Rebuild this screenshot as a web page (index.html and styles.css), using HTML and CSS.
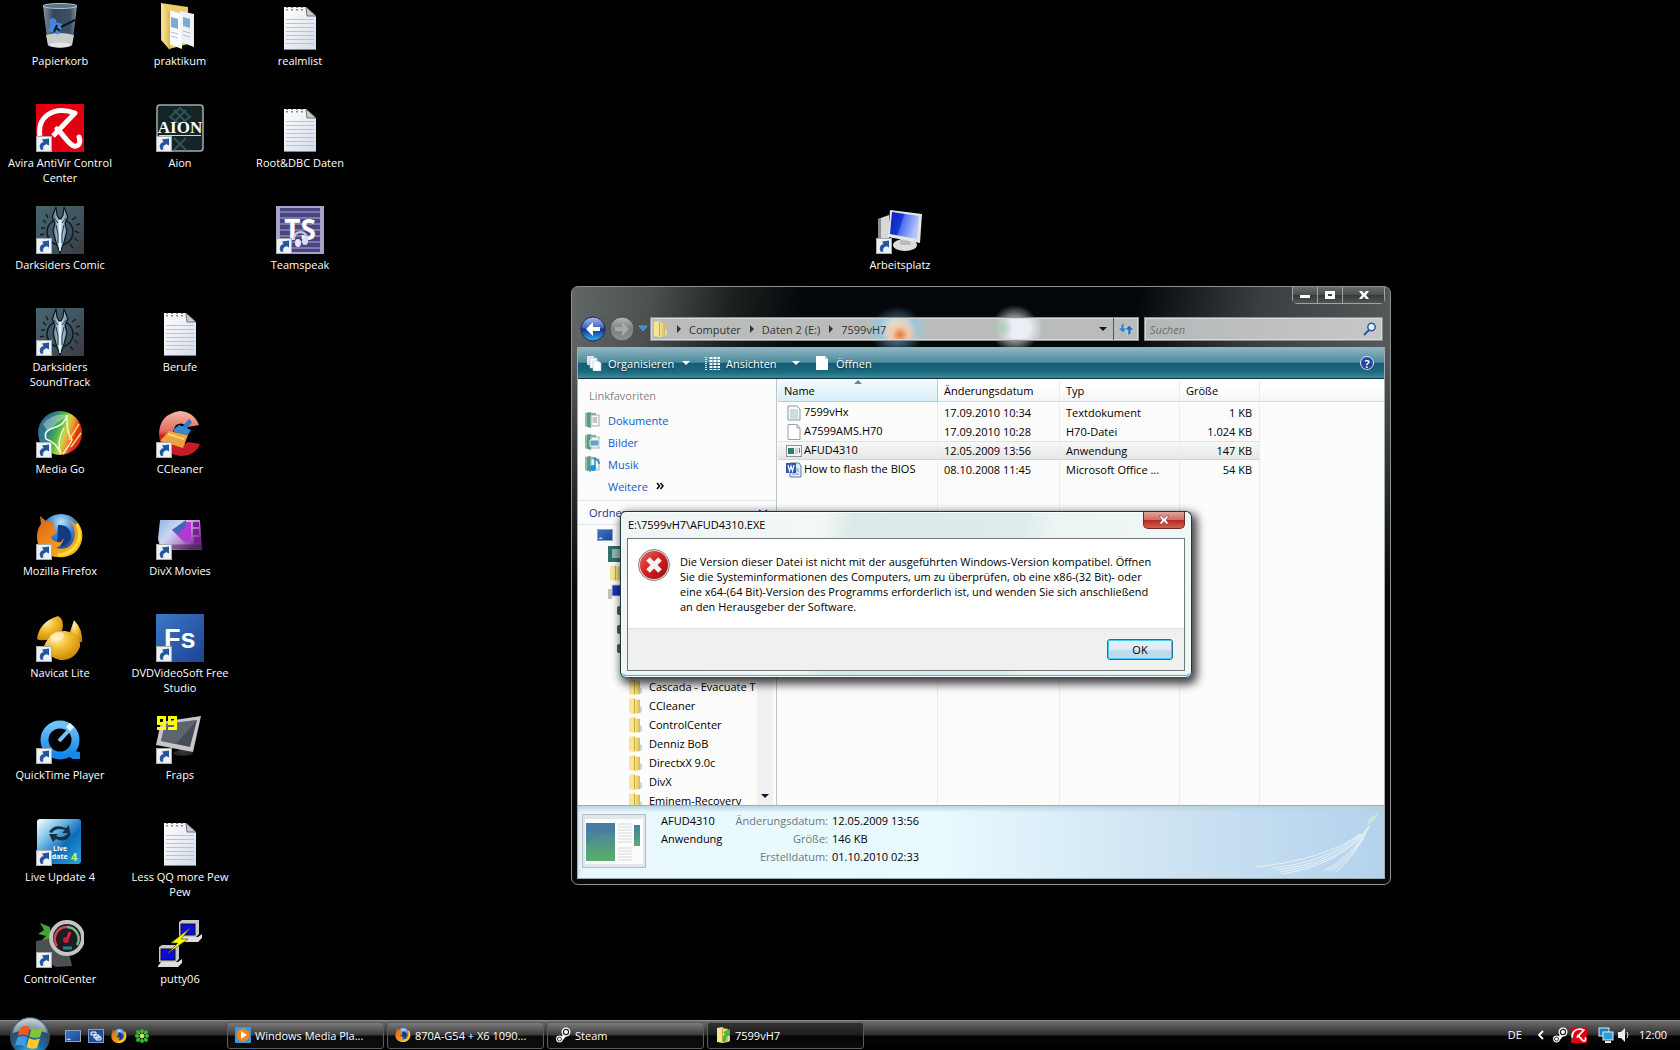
FILE: index.html
```html
<!DOCTYPE html>
<html lang="de">

<head>
    <meta charset="UTF-8">
    <meta name="viewport" content="width=device-width, initial-scale=1.0">
    <title>Desktop</title>
    <link rel="stylesheet" href="styles.css">
</head>

<body>
    <svg class="sprites" aria-hidden="true">
        <defs>
            <linearGradient id="gFolder" x1="0" x2="1"><stop offset="0" stop-color="#f9eba6"/><stop offset=".5" stop-color="#ecd477"/><stop offset="1" stop-color="#d8b64c"/></linearGradient>
            <linearGradient id="gPaper" x1="0" y1="0" x2="1" y2="1"><stop offset="0" stop-color="#fff"/><stop offset="1" stop-color="#d3dceb"/></linearGradient>
            <linearGradient id="gGlass" x1="0" x2="1"><stop offset="0" stop-color="#8894a0"/><stop offset=".3" stop-color="#34485e"/><stop offset=".8" stop-color="#3b5064"/><stop offset="1" stop-color="#8b969e"/></linearGradient>
            <linearGradient id="gDark" x1="0" y1="0" x2="1" y2="1"><stop offset="0" stop-color="#47646f"/><stop offset=".5" stop-color="#3f5662"/><stop offset="1" stop-color="#3c3a3e"/></linearGradient>
            <linearGradient id="gSteel" x1="0" x2="1"><stop offset="0" stop-color="#3c5c7a"/><stop offset=".5" stop-color="#d5ebf5"/><stop offset="1" stop-color="#4f7d9b"/></linearGradient>
            <linearGradient id="gBlue" x1="0" y1="0" x2="1" y2="1"><stop offset="0" stop-color="#3c78c6"/><stop offset="1" stop-color="#1d4493"/></linearGradient>
            <linearGradient id="gScreen" x1="0" x2="1" y2=".3"><stop offset="0" stop-color="#0b1fae"/><stop offset=".45" stop-color="#1738d6"/><stop offset=".5" stop-color="#4e6ef0"/><stop offset="1" stop-color="#b3c5fb"/></linearGradient>
            <linearGradient id="gRainbow" x1="0" x2="1" y2=".35"><stop offset="0" stop-color="#2f5f95"/><stop offset=".35" stop-color="#2c7f8a"/><stop offset=".55" stop-color="#4fb643"/><stop offset=".7" stop-color="#c7d843"/><stop offset=".8" stop-color="#f09a35"/><stop offset=".95" stop-color="#e02d1b"/></linearGradient>
            <linearGradient id="gFox" x1="0" y1="0" x2="1" y2="1"><stop offset="0" stop-color="#d9600f"/><stop offset=".5" stop-color="#f3901d"/><stop offset="1" stop-color="#f4c61f"/></linearGradient>
            <radialGradient id="gGlobe" cx=".5" cy=".2" r=".8"><stop offset="0" stop-color="#b9e2fa"/><stop offset=".4" stop-color="#3d86cf"/><stop offset="1" stop-color="#0d2f78"/></radialGradient>
            <radialGradient id="gGold" cx=".35" cy=".25" r=".8"><stop offset="0" stop-color="#fff1b8"/><stop offset=".45" stop-color="#f3bd2f"/><stop offset="1" stop-color="#c88508"/></radialGradient>
            <linearGradient id="gDivx" x1="0" x2="1" y2=".6"><stop offset="0" stop-color="#8fb4e4"/><stop offset=".4" stop-color="#ccd5ef"/><stop offset=".7" stop-color="#b68ccc"/><stop offset="1" stop-color="#6b2d86"/></linearGradient>
            <linearGradient id="gRed" y1="0" x2="0" y2="1"><stop offset="0" stop-color="#f5b9a9"/><stop offset=".45" stop-color="#df6a5e"/><stop offset=".55" stop-color="#cc2026"/><stop offset="1" stop-color="#c21a26"/></linearGradient>
            <linearGradient id="gQt" y1="0" x2="0" y2="1"><stop offset="0" stop-color="#6fc2f8"/><stop offset="1" stop-color="#1486e8"/></linearGradient>
            <linearGradient id="gLive" x1="0" y1="0" x2="1" y2="1"><stop offset="0" stop-color="#fff"/><stop offset=".3" stop-color="#7fc3ec"/><stop offset=".6" stop-color="#0b6db8"/><stop offset="1" stop-color="#2aa6e0"/></linearGradient>
            <radialGradient id="gOrb" cx=".5" cy="1" r=".95"><stop offset="0" stop-color="#3fd0fa"/><stop offset=".4" stop-color="#1b6fa4"/><stop offset=".75" stop-color="#2d4d66"/><stop offset="1" stop-color="#9fb6c4"/></radialGradient>
            <linearGradient id="gBack" y1="0" x2="0" y2="1"><stop offset="0" stop-color="#a9bfe8"/><stop offset=".45" stop-color="#3f64bd"/><stop offset=".5" stop-color="#0f2f96"/><stop offset="1" stop-color="#3ab4f0"/></linearGradient>
            <linearGradient id="gForward" y1="0" x2="0" y2="1"><stop offset="0" stop-color="#b6b8b8"/><stop offset=".5" stop-color="#7d8080"/><stop offset="1" stop-color="#8f9292"/></linearGradient>
            <linearGradient id="gError" x1="0" y1="0" x2="1" y2="1"><stop offset="0" stop-color="#ea6b60"/><stop offset=".5" stop-color="#cf1d1d"/><stop offset="1" stop-color="#9c0e12"/></linearGradient>
            <linearGradient id="gApp" y1="0" x2="0" y2="1"><stop offset="0" stop-color="#4a7aa8"/><stop offset="1" stop-color="#56b06a"/></linearGradient>
        </defs>

        <symbol id="shortcut" viewBox="0 0 16 16">
            <rect x=".5" y=".5" width="15" height="15" fill="#eef1f4" stroke="#a9acae"/>
            <path d="M5 14C2.500 10 4 7 7.500 6L6 3.500L13 2.500V9.500L10.800 8.200C7.500 9 6.500 11 7.500 13.500Z" fill="#23569f"/>
        </symbol>

        <symbol id="textfile" viewBox="0 0 48 48">
            <path d="M8 5H30L40 14V47H8Z" fill="url(#gPaper)"/>
            <path d="M8 47.500H40" stroke="#7d8790"/>
            <path d="M10 17.500H38M10 21.500H38M10 25.500H38M10 29.500H38M10 33.500H38M10 37.500H38M10 41.500H38" stroke="#b4c4dc"/>
            <path d="M30 5L31 14H40Z" fill="#c9ccd0" stroke="#555" stroke-width=".8"/>
            <path d="M11 8.500V5M16 8.500V5M21 8.500V5M26 8.500V5" stroke="#888" stroke-width="2" stroke-dasharray="1.500 1"/>
        </symbol>

        <symbol id="darksiders" viewBox="0 0 48 48">
            <rect width="48" height="48" fill="url(#gDark)"/>
            <circle cx="24" cy="26" r="13" fill="none" stroke="#10191f" stroke-width="1.500"/>
            <path d="M7 14L10 17M5 22H9M4 29L8 28M36 14L40 11M40 19L44 18M39 25L43 27M38 32L42 35M34 38L37 42M12 12L10 8M10 35L7 37" stroke="#131d24" stroke-width="1.500"/>
            <path d="M20 1L21 9L23 13H25L27 9L28 1L32 11L29 17L31 25L28 36L24 47L20 36L17 25L19 17L16 11Z" fill="url(#gSteel)" stroke="#0d161d" stroke-width="1.200"/>
            <path d="M24 14V45" stroke="#eef8fc" stroke-width="1.500"/>
            <path d="M20 19L22 28V37M28 19L26 28V37M18 12L22 17M30 12L26 17" stroke="#1b3348" fill="none"/>
        </symbol>

        <symbol id="firefox" viewBox="0 0 48 48">
            <circle cx="25" cy="23" r="21" fill="url(#gGlobe)"/>
            <path d="M22 13Q31 12 34 19Q38 27 30 33Q25 36 21 30Z" fill="#123a83"/>
            <path d="M40 9Q48 17 46 28Q43 42 29 45Q9 47 2 32Q-1 20 5 12L4 4L11 10L18 9L17 15L21 20L15 25Q17 31 25 30L28 26Q26 34 20 36Q32 39 37 30Q42 18 33 8Q38 9 42 15Z" fill="url(#gFox)"/>
            <path d="M41 12Q48 28 36 38Q29 43 22 43" fill="none" stroke="#ffdf3a" stroke-width="3"/>
        </symbol>

        <symbol id="folder" viewBox="0 0 16 16">
            <path d="M2 1L8 0V16L2 15Z" fill="#f6e594"/>
            <path d="M7 1L13 2V15L7 16Z" fill="url(#gFolder)"/>
            <path d="M13 8L15 9V14L13 15Z" fill="#cfd8c4"/>
            <path d="M7.500 1V15" stroke="#c9a83e"/>
        </symbol>

        <symbol id="avira" viewBox="0 0 48 48">
            <rect width="48" height="48" fill="#e1000f"/>
            <path d="M4 32C1 14 16 1 39 9L17 32" fill="none" stroke="#fff" stroke-width="5" stroke-linejoin="round"/>
            <path d="M21 25C28 31 32 40 38 42C43 43 45 38 43 33" fill="none" stroke="#fff" stroke-width="5" stroke-linecap="round"/>
        </symbol>

        <symbol id="steam" viewBox="0 0 16 16">
            <path d="M1 10L6 11L9 6L12 8L8 13L5 14Z" fill="#fff"/>
            <circle cx="11" cy="5" r="4.500" fill="#fff"/><circle cx="11" cy="5" r="2.600" fill="#fff" stroke="#222" stroke-width="1.200"/>
            <circle cx="4.500" cy="12" r="3.400" fill="#fff"/><circle cx="4.500" cy="12" r="2" fill="none" stroke="#333"/>
        </symbol>

        <symbol id="library" viewBox="0 0 16 16">
            <path d="M1 1L7 0V16L1 14Z" fill="#5b9b85"/><path d="M1 1L3 1V14.500L1 14Z" fill="#8fc0ad"/>
            <path d="M6 1H12V14H6Z" fill="#7aa9a6"/><rect x="7" y="3" width="8" height="11" fill="#f4f6f6" stroke="#9fb0b0"/>
        </symbol>

        <symbol id="screen" viewBox="0 0 16 16">
            <rect x=".5" y="2.500" width="15" height="11" fill="url(#gBlue)" stroke="#8fa6bd"/><path d="M1 12H6L4 10Z" fill="#8fe0f0"/>
        </symbol>
    </svg>

    <main class="desktop">
        <ul class="shortcuts">
            <li class="col1 row1"><button class="shortcut">
                <svg viewBox="0 0 48 48">
                    <path d="M7 4H41L36 44Q24 48 12 44Z" fill="url(#gGlass)"/>
                    <ellipse cx="24" cy="4" rx="17" ry="2.500" fill="#5b7186" stroke="#b9c2c8"/>
                    <path d="M10 33Q24 29 38 33L36 43Q24 48 12 43Z" fill="#c9cbca"/><ellipse cx="24" cy="43" rx="11" ry="2.500" fill="#e4e5e3"/>
                    <path d="M13 18Q19 13 21 21Q29 20 25 27Q24 36 18 30Q9 31 14 24Z" fill="#4585dc"/><path d="M19 25L24 29M25 25L39 18M21 23L18 30" stroke="#0d1620" stroke-width="2"/>
                </svg><span>Papierkorb</span></button></li>
            <li class="col1 row2"><button class="shortcut">
                <svg viewBox="0 0 48 48"><use href="#avira"/><use href="#shortcut" y="32" width="16" height="16"/></svg><span>Avira AntiVir Control Center</span></button></li>
            <li class="col1 row3"><button class="shortcut">
                <svg viewBox="0 0 48 48"><use href="#darksiders"/><use href="#shortcut" y="32" width="16" height="16"/></svg><span>Darksiders Comic</span></button></li>
            <li class="col1 row4"><button class="shortcut">
                <svg viewBox="0 0 48 48"><use href="#darksiders"/><use href="#shortcut" y="32" width="16" height="16"/></svg><span>Darksiders SoundTrack</span></button></li>
            <li class="col1 row5"><button class="shortcut">
                <svg viewBox="0 0 48 48">
                    <circle cx="24" cy="23" r="22" fill="url(#gRainbow)"/>
                    <path d="M7 14Q16 2 34 5Q22 10 12 22Z" fill="#fff" opacity=".35"/>
                    <path d="M31 5Q29 15 17 18Q7 21 10 29Q20 32 25 44M31 5Q30 22 36 30Q32 37 27 44M25 44Q20 32 28 18" fill="none" stroke="#e8fbe0" stroke-width="1.500"/>
                    <path d="M33 30L43 14M35 37L45 23" stroke="#ffe14d" stroke-width="1.500"/>
                    <use href="#shortcut" y="32" width="16" height="16"/>
                </svg><span>Media Go</span></button></li>
            <li class="col1 row6"><button class="shortcut">
                <svg viewBox="0 0 48 48"><use href="#firefox"/><use href="#shortcut" y="32" width="16" height="16"/></svg><span>Mozilla Firefox</span></button></li>
            <li class="col1 row7"><button class="shortcut">
                <svg viewBox="0 0 48 48">
                    <path d="M1 25Q3 8 22 2Q29 5 26 17Q17 28 3 26Z" fill="url(#gGold)"/>
                    <path d="M38 6Q47 15 46 28Q39 29 34 18Z" fill="url(#gGold)"/>
                    <path d="M8 32Q14 17 29 17Q45 19 44 33Q38 47 24 46Q11 43 8 32Z" fill="url(#gGold)"/>
                    <path d="M14 22Q22 14 28 20Q27 28 16 28Z" fill="#fff3cf" opacity=".6"/>
                    <use href="#shortcut" y="32" width="16" height="16"/>
                </svg><span>Navicat Lite</span></button></li>
            <li class="col1 row8"><button class="shortcut">
                <svg viewBox="0 0 48 48">
                    <circle cx="24" cy="24" r="15.500" fill="none" stroke="url(#gQt)" stroke-width="8"/>
                    <path d="M34 34L44 36V43H37L30 39Z" fill="#1888e8"/><path d="M23 25L35 12" stroke="#72c3fa" stroke-width="4"/><path d="M32 13L36 9" stroke="#e9f6ff" stroke-width="6"/>
                    <use href="#shortcut" y="32" width="16" height="16"/>
                </svg><span>QuickTime Player</span></button></li>
            <li class="col1 row9"><button class="shortcut">
                <svg viewBox="0 0 48 48">
                    <rect x="1" y="1" width="44" height="45" rx="3" fill="url(#gLive)"/>
                    <path d="M13 14Q18 5 30 10L33 7L34 15L26 15L29 12Q20 9 16 15Z" fill="#173043"/><path d="M35 15Q32 26 20 21L17 24L13 16L22 16L20 18Q28 21 32 15Z" fill="#173043"/>
                    <text class="live" x="17" y="33">Live</text><text class="live" x="6" y="41">Update</text><text class="four" x="35" y="43">4</text>
                    <use href="#shortcut" y="32" width="16" height="16"/>
                </svg><span>Live Update 4</span></button></li>
            <li class="col1 row10"><button class="shortcut">
                <svg viewBox="0 0 48 48">
                    <path d="M4 3L14 7L15 18L4 22L10 16L2 14L8 10Z" fill="#44a233"/><path d="M0 21L18 18L34 37L36 46L20 47L0 36Z" fill="#4d5052"/>
                    <circle cx="31" cy="18" r="16" fill="#1b1d1e" stroke="#c2c5c4" stroke-width="4"/>
                    <path d="M21 26A12 12 0 0 1 31 7" fill="none" stroke="#d4464e" stroke-width="2.500"/><path d="M31 7A12 12 0 0 1 41 25" fill="none" stroke="#79b584" stroke-width="2.500"/>
                    <path d="M31 20L34 12" stroke="#e3243c" stroke-width="3"/><circle cx="30" cy="20" r="3" fill="#c71f38"/><path d="M27 28H36" stroke="#1f8494" stroke-width="3"/>
                    <use href="#shortcut" y="32" width="16" height="16"/>
                </svg><span>ControlCenter</span></button></li>

            <li class="col2 row1"><button class="shortcut">
                <svg viewBox="0 0 48 48">
                    <path d="M5 1L32 5V42L13 47L5 38Z" fill="#e9cd6c"/><path d="M13 8L26 12V47L13 42Z" fill="#fbfcfd"/><path d="M24 9L38 12V45L25 40Z" fill="#edf1f7"/>
                    <path d="M15 15L22 17V27L15 25ZM27 15L34 17V26L27 24Z" fill="#7babd1"/><path d="M15 30L22 32M27 29L34 31M15 34L22 36M27 33L34 35" stroke="#b3bbc8"/>
                    <path d="M5 1L14 9V48L6 38Z" fill="url(#gFolder)"/>
                </svg><span>praktikum</span></button></li>
            <li class="col2 row2"><button class="shortcut">
                <svg viewBox="0 0 48 48">
                    <rect x="1" y="1" width="46" height="46" rx="3" fill="#152426" stroke="#a5acad" stroke-width="1.500"/>
                    <path d="M24 4L34 13L24 20L14 13ZM18 6L30 18M30 6L18 18M18 34L30 46M30 34L18 46" fill="none" stroke="#2f5459" stroke-width="2"/>
                    <text class="aion" x="24" y="29">AION</text><path d="M3 31.500H45" stroke="#cfd7d8"/>
                    <use href="#shortcut" y="32" width="16" height="16"/>
                </svg><span>Aion</span></button></li>
            <li class="col2 row4"><button class="shortcut"><svg viewBox="0 0 48 48"><use href="#textfile"/></svg><span>Berufe</span></button></li>
            <li class="col2 row5"><button class="shortcut">
                <svg viewBox="0 0 48 48">
                    <path d="M43 15L32 17Q26 11 20 15Q14 24 19 31Q26 37 32 32L44 34Q39 46 25 46Q5 44 3 25Q3 4 24 1Q38 2 43 15Z" fill="url(#gRed)"/>
                    <path d="M33 9L36 12L31 19L26 17Z" fill="#2b78c9"/><path d="M18 19L23 15L35 20L32 25L18 22Z" fill="#3a86d0"/><path d="M13 21L32 25L27 38L4 31Z" fill="#eea23c"/><path d="M12 24L28 29" stroke="#fbd384" stroke-width="2"/>
                    <use href="#shortcut" y="32" width="16" height="16"/>
                </svg><span>CCleaner</span></button></li>
            <li class="col2 row6"><button class="shortcut">
                <svg viewBox="0 0 48 48">
                    <path d="M4 8H44L46 38H5L2 27Z" fill="url(#gDivx)"/><path d="M35 10V30H28L16 18L28 10Z" fill="#b637d6"/><path d="M16 18L30 8V14L22 22Z" fill="#3c6bbd"/>
                    <path d="M37 10H43V15H37ZM37 17H43V23H37ZM38 25H44V31H38Z" fill="#7d1c98"/><path d="M4 35H46" stroke="#3d2148" stroke-width="5" opacity=".5"/>
                    <use href="#shortcut" y="32" width="16" height="16"/>
                </svg><span>DivX Movies</span></button></li>
            <li class="col2 row7"><button class="shortcut">
                <svg viewBox="0 0 48 48"><rect width="48" height="48" fill="url(#gBlue)"/><text class="fs" x="8" y="34">Fs</text><use href="#shortcut" y="32" width="16" height="16"/></svg><span>DVDVideoSoft Free Studio</span></button></li>
            <li class="col2 row8"><button class="shortcut">
                <svg viewBox="0 0 48 48">
                    <ellipse cx="27" cy="37" rx="10" ry="3" fill="#262829"/><path d="M22 29H33L30 38H24Z" fill="#343637"/>
                    <path d="M5 6L45 0L37 36L0 29Z" fill="#c6c7c6"/><path d="M9 8L41 4L34 31L5 25Z" fill="#454c55"/><path d="M9 8L41 4L20 28L5 25Z" fill="#727a84" opacity=".55"/>
                    <path d="M1 0H10V14H1V11H7V9H1ZM4 3V6H7V3ZM12 0H21V14H12V11H18V9H12ZM15 3V6H18V3Z" fill="#ff0" fill-rule="evenodd"/>
                    <use href="#shortcut" y="32" width="16" height="16"/>
                </svg><span>Fraps</span></button></li>
            <li class="col2 row9"><button class="shortcut"><svg viewBox="0 0 48 48"><use href="#textfile"/></svg><span>Less QQ more Pew Pew</span></button></li>
            <li class="col2 row10"><button class="shortcut">
                <svg viewBox="0 0 48 48">
                    <g id="pc"><path d="M23 2L26 0H43V14L40 17H23Z" fill="#c6c6c6"/><rect x="25" y="4" width="14" height="11" fill="#0a0ae0" stroke="#111"/><path d="M22 21L25 17H42L46 14V18L42 22H22Z" fill="#dedede"/></g>
                    <use href="#pc" x="-20" y="25"/>
                    <path d="M34 8L15 23H22L12 33L32 19H25Z" fill="#ff0" stroke="#5a5a00" stroke-width=".7"/>
                </svg><span>putty06</span></button></li>

            <li class="col3 row1"><button class="shortcut"><svg viewBox="0 0 48 48"><use href="#textfile"/></svg><span>realmlist</span></button></li>
            <li class="col3 row2"><button class="shortcut"><svg viewBox="0 0 48 48"><use href="#textfile"/></svg><span>Root&amp;DBC Daten</span></button></li>
            <li class="col3 row3"><button class="shortcut">
                <svg viewBox="0 0 48 48">
                    <rect width="48" height="48" fill="#a6a2cc"/><rect x="4" y="2" width="40" height="44" fill="#4c4680"/>
                    <path d="M4 6H44M4 12H44M4 18H44M4 24H44M4 30H44M4 36H44M4 42H44" stroke="#7d78ad" stroke-width="2"/>
                    <text class="ts" x="24" y="34">TS</text>
                    <path d="M18 34Q18 26 25 26Q32 27 31 36" fill="none" stroke="#cdcce6" stroke-width="2"/><ellipse cx="22" cy="37" rx="3" ry="4" fill="#e8e8f4"/><ellipse cx="29" cy="35" rx="3" ry="4" fill="#dcdcf0"/>
                    <use href="#shortcut" y="32" width="16" height="16"/>
                </svg><span>Teamspeak</span></button></li>
            <li class="col8 row3"><button class="shortcut">
                <svg viewBox="0 0 48 48">
                    <path d="M2 13L13 9V36L2 33Z" fill="#d6d7d8"/><path d="M2 13L5 12V34L2 33Z" fill="#8b8d8f"/>
                    <ellipse cx="29" cy="39" rx="12" ry="6" fill="#dcdddd"/><path d="M24 29H34L35 39H24Z" fill="#b9bbbc"/>
                    <path d="M14 4L46 8L44 37L12 31Z" fill="#e4e5e6"/><path d="M16 6L43 10L41 33L14 28Z" fill="url(#gScreen)"/>
                    <use href="#shortcut" y="32" width="16" height="16"/>
                </svg><span>Arbeitsplatz</span></button></li>
        </ul>

        <section class="window explorer">
            <div class="caption">
                <button aria-label="Minimieren"><svg viewBox="0 0 12 12"><path d="M1 6H11V9H1Z" fill="#fff"/></svg></button>
                <button aria-label="Maximieren"><svg viewBox="0 0 12 12"><path d="M1 2H11V10H1ZM4 5V7H8V5Z" fill="#fff" fill-rule="evenodd"/></svg></button>
                <button class="wide" aria-label="Schließen"><svg viewBox="0 0 12 12"><path d="M1 2H4L6 4.500L8 2H11L8 6L11 10H8L6 7.500L4 10H1L4 6Z" fill="#fff"/></svg></button>
            </div>
            <nav class="navbar">
                <button class="round" aria-label="Zurück"><svg viewBox="0 0 26 26"><circle cx="13" cy="13" r="12" fill="url(#gBack)" stroke="#1b2a4c"/><path d="M6 13L13 6V11H20V15H13V20Z" fill="#fff"/></svg></button>
                <button class="round" aria-label="Vorwärts"><svg viewBox="0 0 26 26"><circle cx="13" cy="13" r="12" fill="url(#gForward)" stroke="#4c4f50"/><path d="M20 13L13 6V11H6V15H13V20Z" fill="#a9abab"/></svg></button>
                <button class="recent" aria-label="Letzte Seiten"><svg viewBox="0 0 10 8"><path d="M1 1H9L5 6Z" fill="#2f8bc9" stroke="#79bfe6" stroke-width=".6"/></svg></button>
                <div class="address">
                    <svg class="icon" viewBox="0 0 16 16"><use href="#folder"/></svg>
                    <i class="sep"></i><button>Computer</button>
                    <i class="sep"></i><button>Daten 2 (E:)</button>
                    <i class="sep"></i><button>7599vH7</button>
                    <i class="drop"></i>
                    <button class="refresh" aria-label="Aktualisieren"><svg viewBox="0 0 16 16"><path d="M6 1V7H9L5 12L0 7H3V4Z" fill="#3d83c6" stroke="#d8e6f2" stroke-width=".5"/><path d="M10 15V9H7L11 4L16 9H13V12Z" fill="#2d6db4" stroke="#d8e6f2" stroke-width=".5"/></svg></button>
                </div>
                <div class="search">
                    <input type="text" placeholder="Suchen" aria-label="Suchen">
                    <svg viewBox="0 0 14 14"><circle cx="8.500" cy="5" r="3.700" fill="#e6eefa" stroke="#2659a8" stroke-width="1.500"/><path d="M6 8L1 13" stroke="#2659a8" stroke-width="2"/></svg>
                </div>
            </nav>

            <div class="client">
                <div class="toolbar">
                    <button class="organize"><svg viewBox="0 0 16 16"><path d="M1 1H8V10H1Z" fill="#fff" opacity=".8"/><path d="M4 3H11V13H4Z" fill="#fff" stroke="#9fc0d4" stroke-width=".6"/><path d="M7 6H12L15 8V16H7Z" fill="#fff" stroke="#9fc0d4" stroke-width=".6"/></svg>Organisieren<i class="drop light"></i></button>
                    <button class="views"><svg viewBox="0 0 16 16"><path d="M2 2V15" stroke="#dfeaf0" stroke-width="2" stroke-dasharray="1 1"/><path d="M7 2V15M11 2V15M15 2V15" stroke="#fff" stroke-width="3" stroke-dasharray="2 1"/></svg>Ansichten<i class="drop light"></i></button>
                    <button><svg viewBox="0 0 16 16"><path d="M2 1H11L14 4V15H2Z" fill="#fff"/><path d="M11 1V4H14Z" fill="#b7d0dc"/></svg>Öffnen</button>
                    <button class="help" aria-label="Hilfe"><span>?</span></button>
                </div>

                <div class="panes">
                    <aside class="sidebar">
                        <h2>Linkfavoriten</h2>
                        <ul class="favorites">
                            <li><svg viewBox="0 0 16 16"><use href="#library"/><path d="M8.500 6H13M8.500 8H13M8.500 10H13" stroke="#8e9a9e"/></svg><a href="#">Dokumente</a></li>
                            <li><svg viewBox="0 0 16 16"><use href="#library"/><path d="M6 6H15V12H6Z" fill="#5fa1cc" stroke="#e6eef2"/></svg><a href="#">Bilder</a></li>
                            <li><svg viewBox="0 0 16 16"><use href="#library"/><path d="M11 2V12M11 3Q15 4 15 8" fill="none" stroke="#1587cf" stroke-width="1.500"/><circle cx="9" cy="12" r="3" fill="#1a95dd"/></svg><a href="#">Musik</a></li>
                            <li><svg viewBox="0 0 16 16"></svg><a href="#">Weitere</a><svg class="more" viewBox="0 0 8 8"><path d="M1 1L3.500 4L1 7M4.500 1L7 4L4.500 7" fill="none" stroke="#000" stroke-width="1.500"/></svg></li>
                        </ul>
                        <h3>Ordner<svg viewBox="0 0 10 8"><path d="M1 1L5 4L9 1M1 4L5 7L9 4" fill="none" stroke="#1d3287" stroke-width="1.500"/></svg></h3>
                        <div class="folders">
                            <ul class="tree">
                                <li class="level0"><svg viewBox="0 0 16 16"><use href="#screen"/></svg></li>
                                <li class="level1"><svg viewBox="0 0 16 16"><rect width="16" height="16" fill="#2f6f6b"/><rect x="4" y="3" width="9" height="9" fill="#8fb7ad"/></svg></li>
                                <li class="level1"><svg viewBox="0 0 16 16"><use href="#folder"/></svg></li>
                                <li class="level1"><svg viewBox="0 0 16 16"><rect y="5" width="4" height="10" fill="#bfc1bb"/><rect x="4" y="1" width="12" height="11" fill="#1731b5" stroke="#c8ccd4"/></svg></li>
                                <li class="level2"><svg viewBox="0 0 16 16"><rect y="3" width="16" height="9" rx="2" fill="#555b5e"/></svg></li>
                                <li class="level2"><svg viewBox="0 0 16 16"><rect y="3" width="16" height="9" rx="2" fill="#555b5e"/></svg></li>
                                <li class="level2"><svg viewBox="0 0 16 16"><rect y="3" width="16" height="9" rx="2" fill="#555b5e"/></svg></li>
                                <li class="level3"><svg viewBox="0 0 16 16"><use href="#folder"/></svg></li>
                                <li class="level3"><svg viewBox="0 0 16 16"><use href="#folder"/></svg>Cascada - Evacuate T</li>
                                <li class="level3"><svg viewBox="0 0 16 16"><use href="#folder"/></svg>CCleaner</li>
                                <li class="level3"><svg viewBox="0 0 16 16"><use href="#folder"/></svg>ControlCenter</li>
                                <li class="level3"><svg viewBox="0 0 16 16"><use href="#folder"/></svg>Denniz BoB</li>
                                <li class="level3"><svg viewBox="0 0 16 16"><use href="#folder"/></svg>DirectxX 9.0c</li>
                                <li class="level3"><svg viewBox="0 0 16 16"><use href="#folder"/></svg>DivX</li>
                                <li class="level3"><svg viewBox="0 0 16 16"><use href="#folder"/></svg>Eminem-Recovery</li>
                            </ul>
                            <div class="scrollbar"><i class="drop"></i></div>
                        </div>
                    </aside>

                    <div class="files">
                        <table>
                            <thead>
                                <tr><th class="name sorted">Name</th><th class="date">Änderungsdatum</th><th class="type">Typ</th><th class="size">Größe</th><th></th></tr>
                            </thead>
                            <tbody>
                                <tr><td class="name"><svg viewBox="0 0 16 16"><path d="M2 1H11L14 4V15H2Z" fill="#fafbfc" stroke="#8d979c"/><path d="M4 5H12M4 7H12M4 9H12M4 11H12M4 13H12" stroke="#9fc0cf"/></svg>7599vHx</td><td>17.09.2010 10:34</td><td>Textdokument</td><td class="num">1 KB</td><td></td></tr>
                                <tr><td class="name"><svg viewBox="0 0 16 16"><path d="M2 .500H11L14 4V15.500H2Z" fill="#fff" stroke="#9aa0a4"/><path d="M11 .500V4H14" fill="none" stroke="#9aa0a4"/></svg>A7599AMS.H70</td><td>17.09.2010 10:28</td><td>H70-Datei</td><td class="num">1.024 KB</td><td></td></tr>
                                <tr class="selected"><td class="name"><svg viewBox="0 0 16 16"><rect x=".5" y="2.500" width="15" height="11" fill="#f3f4f4" stroke="#8e9599"/><rect x="2" y="5" width="6" height="6" fill="#2f7f6d"/><path d="M9 6H12M9 8H12M9 10H12" stroke="#aab"/><path d="M13.500 5V10" stroke="#3e8870"/></svg>AFUD4310</td><td>12.05.2009 13:56</td><td>Anwendung</td><td class="num">147 KB</td><td></td></tr>
                                <tr><td class="name"><svg viewBox="0 0 16 16"><path d="M4 1H13L15 4V15H4Z" fill="#dfe9fa" stroke="#5878b5"/><path d="M9 7H13M9 9H13M6 12H13" stroke="#7f9cd0"/><rect y="1" width="10" height="10" fill="#2b57ae"/><path d="M2 3L3.500 9L5 4L6.500 9L8 3" fill="none" stroke="#fff" stroke-width="1.200"/></svg>How to flash the BIOS</td><td>08.10.2008 11:45</td><td>Microsoft Office ...</td><td class="num">54 KB</td><td></td></tr>
                                <tr class="filler"><td></td><td></td><td></td><td></td><td></td></tr>
                            </tbody>
                        </table>
                    </div>
                </div>

                <footer class="details">
                    <svg class="thumb" viewBox="0 0 64 54">
                        <rect x=".5" y=".5" width="63" height="53" fill="#e4e7ea" stroke="#b7bfc6"/><rect x="3" y="5" width="58" height="45" fill="#fbfcfc"/>
                        <rect x="4" y="9" width="29" height="38" fill="url(#gApp)"/><path d="M4 30Q12 20 33 19V9H4Z" fill="#4879a4" opacity=".5"/>
                        <path d="M36 10H50M36 13H50M36 16H50M36 19H50M36 22H50M36 25H50M36 28H50M36 34H50M36 37H50M36 40H50M36 43H50M36 46H50" stroke="#d5d8da"/>
                        <rect x="52" y="11" width="6" height="21" fill="url(#gApp)"/>
                    </svg>
                    <div class="summary"><span>AFUD4310</span><span>Anwendung</span></div>
                    <dl>
                        <dt>Änderungsdatum:</dt><dd>12.05.2009 13:56</dd>
                        <dt>Größe:</dt><dd>146 KB</dd>
                        <dt>Erstelldatum:</dt><dd>01.10.2010 02:33</dd>
                    </dl>
                    <svg class="swoosh" viewBox="0 0 126 64">
                        <path d="M1 55Q70 48 106 22M18 56Q70 51 107 22M22 58Q75 52 108 22M26 60Q80 52 108 23M28 62Q80 54 109 23M70 59Q96 46 113 16M74 59Q98 46 114 16M78 59Q98 48 115 14M82 60Q102 44 116 13" fill="none" stroke="#fff" stroke-width=".8" opacity=".8"/>
                        <path d="M100 34Q110 24 115 14M113 12Q116 5 124 2Q120 8 115 12Z" fill="#cfeec8" stroke="#cfeec8" opacity=".8"/>
                    </svg>
                </footer>
            </div>
        </section>

        <section class="dialog" role="alertdialog" aria-labelledby="dialogTitle">
            <header>
                <h1 id="dialogTitle">E:\7599vH7\AFUD4310.EXE</h1>
                <button class="close" aria-label="Schließen"><svg viewBox="0 0 12 12"><path d="M1 2H4L6 4.500L8 2H11L8 6L11 10H8L6 7.500L4 10H1L4 6Z" fill="#fff" stroke="#7a2a28" stroke-width=".6"/></svg></button>
            </header>
            <div class="dialog-body">
                <div class="message">
                    <svg viewBox="0 0 32 32"><circle cx="16" cy="16" r="15.500" fill="#e3dfdf" stroke="#8b7f80"/><circle cx="16" cy="16" r="14" fill="url(#gError)"/><path d="M10 10L22 22M22 10L10 22" stroke="#f3f3f3" stroke-width="5"/></svg>
                    <p>Die Version dieser Datei ist nicht mit der ausgeführten Windows-Version kompatibel. Öffnen<br>Sie die Systeminformationen des Computers, um zu überprüfen, ob eine x86-(32 Bit)- oder<br>eine x64-(64 Bit)-Version des Programms erforderlich ist, und wenden Sie sich anschließend<br>an den Herausgeber der Software.</p>
                </div>
                <div class="actions"><button class="ok">OK</button></div>
            </div>
        </section>
    </main>

    <footer class="taskbar">
        <button class="start" aria-label="Start">
            <svg viewBox="0 0 42 42">
                <circle cx="21" cy="21" r="19.500" fill="url(#gOrb)" stroke="#3b474f"/>
                <path d="M4 17Q8 3 21 3Q34 3 38 17Q21 10 4 17Z" fill="#fff" opacity=".4"/>
                <path d="M11 12Q16 8 21 11L19 20Q14 17 9 20Z" fill="#ee5a24"/><path d="M22.500 11.500Q28 15 34 12L31 21Q26 23 20.500 20.500Z" fill="#83c43b"/>
                <path d="M8.500 21.500Q13 18.500 18.500 21.500L16 31Q11 27 6 30Z" fill="#3f9be8"/><path d="M20 22Q25 25 31 22.500L28 32Q22 34 17.500 31Z" fill="#fbc92f"/>
            </svg>
        </button>
        <div class="quicklaunch">
            <button aria-label="Desktop anzeigen"><svg viewBox="0 0 16 16"><use href="#screen"/></svg></button>
            <button aria-label="Fenster wechseln"><svg viewBox="0 0 16 16"><rect x=".5" y="1.500" width="15" height="13" fill="#234a94" stroke="#7e9ed2"/><path d="M3 4H8V7H3ZM6 7H11V10H6ZM8 9H13V12H8Z" fill="#3b6ec0" stroke="#fff"/></svg></button>
            <button aria-label="Firefox"><svg viewBox="0 0 48 48"><use href="#firefox"/></svg></button>
            <button aria-label="ICQ"><svg viewBox="0 0 16 16"><g fill="#2fb52b"><circle cx="8" cy="3" r="2"/><circle cx="12" cy="4" r="2"/><circle cx="13" cy="8" r="2"/><circle cx="12" cy="12" r="2"/><circle cx="8" cy="13" r="2"/><circle cx="4" cy="12" r="2"/><circle cx="3" cy="8" r="2"/><circle cx="4" cy="4" r="2"/></g><path d="M8 3V13M3 8H13M4 4L12 12M12 4L4 12" stroke="#4fd043"/><circle cx="8" cy="8" r="2" fill="#d9f25a"/></svg></button>
        </div>
        <div class="tasks">
            <button title="Windows Media Player"><svg viewBox="0 0 16 16"><rect width="16" height="16" rx="1" fill="#3d9ad6"/><circle cx="8" cy="8" r="6.500" fill="#f4871c"/><path d="M6 4L12 8L6 12Z" fill="#fff"/></svg>Windows Media Pla...</button>
            <button><svg viewBox="0 0 48 48"><use href="#firefox"/></svg>870A-G54 + X6 1090...</button>
            <button><svg viewBox="0 0 16 16"><use href="#steam"/></svg>Steam</button>
            <button class="active"><svg viewBox="0 0 16 16"><use href="#folder"/><path d="M8 15Q7 9 10 7L8 5L15 2L15 9L13 8Q11 10 11 14Z" fill="#45ba3b"/></svg>7599vH7</button>
        </div>
        <div class="tray">
            <span class="lang">DE</span>
            <svg class="chevron" viewBox="0 0 8 10"><path d="M6 1L2 5L6 9" fill="none" stroke="#fff" stroke-width="1.800"/></svg>
            <svg viewBox="0 0 16 16"><use href="#steam"/></svg>
            <svg viewBox="0 0 48 48"><use href="#avira"/></svg>
            <svg class="network" viewBox="0 0 16 16"><rect x="1" y="1" width="10" height="8" fill="#1b7fc4" stroke="#e4edf4"/><rect x="5" y="5" width="10" height="8" fill="#2b9bd8" stroke="#e4edf4"/><path d="M7 15H13" stroke="#dfe6ea" stroke-width="2"/></svg>
            <svg viewBox="0 0 16 16"><path d="M1 5H4L8 1V15L4 11H1Z" fill="#eceff1"/><path d="M10 5Q12 8 10 11" fill="none" stroke="#cfd4d8"/></svg>
            <time>12:00</time>
        </div>
    </footer>
</body>

</html>
```
FILE: styles.css
```css
* {
    box-sizing: border-box;
}

body {
    margin: 0;
    height: 100vh;
    display: flex;
    flex-direction: column;
    overflow: hidden;
    background: #000;
    color: #000;
    font-family: "Open Sans", "Noto Sans", sans-serif;
    font-size: 11px;
    line-height: 15px;
}

ul, dl, dd, p, h1, h2, h3 {
    margin: 0;
    padding: 0;
    list-style: none;
    font-size: 11px;
    font-weight: normal;
}

button {
    margin: 0;
    padding: 0;
    border: 0;
    background: none;
    color: inherit;
    font: inherit;
}

svg {
    display: block;
    flex: none;
    width: 16px;
    height: 16px;
}

svg text {
    font-weight: bold;
    fill: #fff;
}

.sprites {
    position: absolute;
    width: 0;
    height: 0;
}

/* Desktop */
.desktop {
    position: relative;
    flex: 1;
    min-height: 0;
}

.shortcuts {
    display: grid;
    grid-template-columns: repeat(auto-fill, 120px);
    grid-template-rows: repeat(10, 102px);
    padding-top: 2px;
}

.shortcut {
    display: flex;
    flex-direction: column;
    align-items: center;
    gap: 3px;
    width: 120px;
    padding: 0 2px;
    color: #fff;
    text-align: center;
}

.shortcut > svg {
    width: 48px;
    height: 48px;
}

.col1 { grid-column: 1; }
.col2 { grid-column: 2; }
.col3 { grid-column: 3; }
.col8 { grid-column: 8; }
.row1 { grid-row: 1; }
.row2 { grid-row: 2; }
.row3 { grid-row: 3; }
.row4 { grid-row: 4; }
.row5 { grid-row: 5; }
.row6 { grid-row: 6; }
.row7 { grid-row: 7; }
.row8 { grid-row: 8; }
.row9 { grid-row: 9; }
.row10 { grid-row: 10; }

.live {
    font-size: 7px;
    line-height: 7px;
}

.four {
    font-size: 11px;
}

svg .four {
    fill: #d8f35c;
}

.aion {
    font-family: "Liberation Serif", serif;
    font-size: 17px;
    text-anchor: middle;
}

.fs {
    font-family: "Liberation Sans", sans-serif;
    font-size: 27px;
}

.ts {
    font-size: 28px;
    text-anchor: middle;
}

/* Arrows */
.drop {
    width: 0;
    height: 0;
    border: 4px solid transparent;
    border-top-color: #111638;
    border-bottom: 0;
}

.drop.light {
    border-top-color: #fff;
}

.sep {
    width: 0;
    height: 0;
    border: 4px solid transparent;
    border-left-color: #333;
    border-right: 0;
}

/* Explorer window */
.explorer {
    position: absolute;
    left: 571px;
    top: 286px;
    width: 820px;
    height: 599px;
    display: flex;
    flex-direction: column;
    padding: 0 5px 5px;
    border: 1px solid #8d9191;
    border-radius: 7px;
    background:
        linear-gradient(to bottom, transparent 60px, #07090a 300px),
        radial-gradient(circle at 325px 45px, #8a6a50 0, #36566a 12px, transparent 26px),
        radial-gradient(circle at 443px 42px, #b9bcc6 8px, transparent 24px),
        linear-gradient(100deg, #616666 0, #4c5050 80px, #1c2020 160px, #04080a 230px, #04080a 560px, #3a3e40 680px, #696d6d 100%);
}

.caption {
    display: flex;
    align-self: flex-end;
    height: 17px;
    border: 1px solid #9ea2a2;
    border-top: 0;
    border-radius: 0 0 5px 5px;
}

.caption button {
    display: flex;
    align-items: center;
    justify-content: center;
    width: 25px;
    border-right: 1px solid #9ea2a2;
    background: linear-gradient(#686c6c, #4a4e4f 50%, #35393a 50%, #505455);
}

.caption .wide {
    width: 41px;
    border: 0;
}

.caption svg {
    width: 12px;
    height: 12px;
}

.navbar {
    display: flex;
    align-items: center;
    height: 24px;
    margin: 13px 2px 6px 3px;
}

.round {
    margin-right: 3px;
}

.round svg {
    width: 26px;
    height: 26px;
}

.recent {
    margin-right: 2px;
}

.recent svg {
    width: 10px;
    height: 8px;
}

.address {
    flex: 1;
    align-self: stretch;
    display: flex;
    align-items: center;
    padding-left: 1px;
    border: 1px solid #8b9090;
    box-shadow: inset 0 0 0 1px #d9dbdb;
    color: #333;
    background:
        radial-gradient(circle at 249px 17px, #e07b3f 0, #f0c9a8 8px, transparent 18px),
        radial-gradient(circle at 246px 10px, #f3f1ee 0, #9cc6dc 18px, transparent 30px),
        radial-gradient(circle at 352px 10px, #a9cdb4 0, transparent 10px),
        radial-gradient(circle at 368px 10px, #eceef5 10px, transparent 24px),
        #b9bcbb;
}

.address .sep {
    margin: 0 8px 0 9px;
}

.address > .drop {
    margin-left: auto;
    margin-right: 6px;
}

.refresh {
    display: flex;
    align-items: center;
    align-self: stretch;
    padding: 0 4px;
    border-left: 1px solid #555;
}

.search {
    display: flex;
    align-items: center;
    align-self: stretch;
    width: 239px;
    margin-left: 5px;
    padding: 0 5px;
    border: 1px solid #8b9090;
    box-shadow: inset 0 0 0 1px #d9dbdb;
    background: linear-gradient(to right, #b5b8b8, #c6c8c8);
}

.search input {
    flex: 1;
    min-width: 0;
    padding: 0;
    border: 0;
    background: none;
    font: inherit;
    font-style: italic;
}

.search input::placeholder {
    color: #6c6f6f;
}

.search svg {
    width: 14px;
    height: 14px;
}

.client {
    flex: 1;
    min-height: 0;
    display: flex;
    flex-direction: column;
    border: 1px solid #a3abad;
    background: #fcfcfc;
}

.toolbar {
    display: flex;
    align-items: center;
    height: 31px;
    padding: 0 10px 0 8px;
    border-bottom: 1px solid #0c3340;
    color: #fff;
    background: linear-gradient(#8fb5c2 0, #4c8a9d 48%, #155a72 50%, #1c6a80 80%, #3d8b99 100%);
}

.toolbar button {
    display: flex;
    align-items: center;
    gap: 6px;
    text-shadow: 0 1px 2px #0a2b38;
}

.toolbar .organize {
    width: 118px;
}

.toolbar .views {
    width: 110px;
}

.toolbar .organize .drop {
    margin-left: 2px;
}

.toolbar .views .drop {
    margin-left: 9px;
}

.toolbar .help {
    justify-content: center;
    width: 14px;
    height: 14px;
    margin-left: auto;
    border: 1px solid #dfe6f2;
    border-radius: 50%;
    background: #2b45a8;
    font-weight: bold;
}

.panes {
    flex: 1;
    min-height: 0;
    display: flex;
}

/* Folder pane */
.sidebar {
    display: flex;
    flex-direction: column;
    width: 199px;
    border-right: 1px solid #b7c4cb;
}

.sidebar h2 {
    padding: 9px 11px 6px;
    color: #858585;
}

.favorites {
    padding-bottom: 3px;
    border-bottom: 1px solid #e2e6ea;
}

.favorites li {
    display: flex;
    align-items: center;
    gap: 8px;
    height: 22px;
    padding-left: 6px;
}

.favorites a {
    color: #1458c4;
    text-decoration: none;
}

.favorites .more {
    width: 8px;
    height: 8px;
}

.sidebar h3 {
    display: flex;
    align-items: center;
    justify-content: space-between;
    height: 24px;
    padding: 0 8px 0 11px;
    border-bottom: 1px solid #e2e6ea;
    color: #1d3287;
}

.sidebar h3 svg {
    width: 10px;
    height: 8px;
}

.folders {
    flex: 1;
    min-height: 0;
    display: flex;
}

.tree {
    flex: 1;
    min-width: 0;
    overflow: hidden;
}

.tree li {
    display: flex;
    align-items: center;
    gap: 6px;
    height: 19px;
    white-space: nowrap;
}

.level0 { padding-left: 19px; }
.level1 { padding-left: 30px; }
.level2 { padding-left: 39px; }
.level3 { padding-left: 49px; }

.scrollbar {
    display: flex;
    align-items: flex-end;
    justify-content: center;
    width: 16px;
    margin-right: 3px;
    padding-bottom: 7px;
    background: #f1f1f2;
}

/* File list */
.files {
    flex: 1;
    margin-left: 1px;
    display: flex;
}

.files table {
    flex: 1;
    width: 100%;
    height: 100%;
    table-layout: fixed;
    border-collapse: separate;
    border-spacing: 0;
}

.files th,
.files td {
    padding: 0 0 0 6px;
    border-right: 1px solid #ececee;
    text-align: left;
    font-weight: normal;
    white-space: nowrap;
}

.files th {
    height: 23px;
    border-bottom: 1px solid #d8dadd;
    background: linear-gradient(#fff 40%, #f4f5f6);
}

.files th:last-child,
.files td:last-child {
    border-right: 0;
}

.files th.sorted {
    position: relative;
    border-color: #a3d0e4;
    background: linear-gradient(#f4fbfe, #d8eef8);
}

.sorted::after {
    content: "";
    position: absolute;
    top: 1px;
    left: 50%;
    margin-left: -4px;
    border: 4px solid transparent;
    border-top: 0;
    border-bottom-color: #5b8ca5;
}

th.name { width: 160px; }
th.date { width: 122px; }
th.type { width: 120px; }
th.size { width: 80px; }

.files td {
    height: 19px;
}

.files tbody tr:first-child td {
    height: 20px;
    padding-top: 1px;
}

.files td.name {
    padding-left: 8px;
}

.files td svg {
    display: inline-block;
    margin-right: 2px;
    vertical-align: middle;
}

.files td.num {
    padding-right: 7px;
    text-align: right;
}

.selected td:not(:last-child) {
    border-top: 1px solid #e0e0e1;
    border-bottom: 1px solid #d5d5d6;
    background: linear-gradient(#f8f8f8, #e6e6e7);
}

.files .filler td {
    height: auto;
}

/* Details pane */
.details {
    display: flex;
    align-items: flex-start;
    height: 73px;
    padding: 6px 4px 0;
    border-top: 1px solid #8fb0c4;
    box-shadow: inset 0 3px 4px #b9d2e2;
    background: linear-gradient(to right, #e8f8fd 0, #e9fafe 45%, #cbe2f2 75%, #b4d2ec 100%);
}

.thumb {
    width: 64px;
    height: 54px;
    margin-top: 2px;
}

.summary {
    display: flex;
    flex-direction: column;
    width: 68px;
    margin-left: 15px;
    line-height: 18px;
}

.details dl {
    display: grid;
    grid-template-columns: 99px auto;
    column-gap: 4px;
    line-height: 18px;
}

.details dt {
    color: #6b7880;
    text-align: right;
    white-space: nowrap;
}

.swoosh {
    width: 126px;
    height: 64px;
    margin-left: auto;
}

/* Error dialog */
.dialog {
    position: absolute;
    left: 620px;
    top: 511px;
    width: 572px;
    height: 167px;
    display: flex;
    flex-direction: column;
    padding: 0 6px 6px;
    border: 1px solid #20363c;
    border-bottom-color: #0f5f7c;
    border-radius: 6px;
    background: linear-gradient(100deg, #eef5f4 0, #f3f8f7 200px, #dce9e8 230px, #e0ecec 400px, #edf4f4 430px, #f1f7f7 100%);
    box-shadow: inset 0 0 0 1px #f6ffff, inset 0 -2px 1px #35b4dc, 3px 4px 10px 2px rgba(0, 0, 0, .75);
}

.dialog header {
    display: flex;
    justify-content: space-between;
    height: 26px;
}

.dialog h1 {
    padding: 5px 0 0 1px;
}

.close {
    display: flex;
    align-items: center;
    justify-content: center;
    width: 42px;
    height: 17px;
    border: 1px solid #6b2a26;
    border-top: 0;
    border-radius: 0 0 5px 5px;
    background: linear-gradient(#dfa39b, #cf6f66 48%, #b7291d 50%, #d1604f);
}

.close svg {
    width: 12px;
    height: 12px;
}

.dialog-body {
    flex: 1;
    display: flex;
    flex-direction: column;
    border: 1px solid #6d7b7d;
}

.message {
    flex: 1;
    display: flex;
    gap: 10px;
    padding: 10px 10px 0;
    background: #fff;
}

.message svg {
    width: 32px;
    height: 32px;
}

.message p {
    padding-top: 5px;
    white-space: nowrap;
}

.actions {
    display: flex;
    justify-content: flex-end;
    height: 42px;
    padding: 10px 11px 0;
    border-top: 1px solid #dfdfdf;
    background: #f0f0f0;
}

.ok {
    width: 66px;
    height: 21px;
    border: 1px solid #2c6f94;
    border-radius: 3px;
    background: linear-gradient(#eaf4fa, #dcebf4 50%, #c5dcea 50%, #bcd9ea);
    box-shadow: inset 0 0 0 1px #47cbf5;
}

/* Taskbar */
.taskbar {
    position: relative;
    display: flex;
    align-items: center;
    height: 30px;
    border-top: 1px solid #8a8a8a;
    color: #fff;
    background: linear-gradient(#6d6d6d, #2c2c2c 48%, #050505 52%, #000);
}

/* the orb is taller than the bar and sticks out above it */
.start {
    position: absolute;
    left: 9px;
    top: -5px;
}

.start svg {
    width: 42px;
    height: 42px;
}

.quicklaunch {
    display: flex;
    gap: 7px;
    width: 162px;
    margin-left: 65px;
}

.tasks {
    flex: 1;
    display: flex;
    gap: 3px;
}

.tasks button {
    display: flex;
    align-items: center;
    gap: 4px;
    width: 157px;
    height: 27px;
    padding: 0 0 1px 7px;
    border: 1px solid #5c5c5c;
    border-radius: 3px;
    white-space: nowrap;
    background: linear-gradient(#7c7c7c, #3a3a3a 48%, #0a0a0a 52%, #0d0d0d);
}

.tasks .active {
    background: linear-gradient(#333, #1c1c1c 48%, #050505 52%, #0b0b0b);
}

.tray {
    display: flex;
    align-items: center;
    gap: 3px;
    padding: 0 13px 2px 0;
}

.lang {
    margin-right: 12px;
}

.chevron {
    width: 8px;
    height: 10px;
    margin-right: 4px;
}

.network {
    margin-left: 8px;
}

.tray time {
    margin-left: 3px;
}
```
